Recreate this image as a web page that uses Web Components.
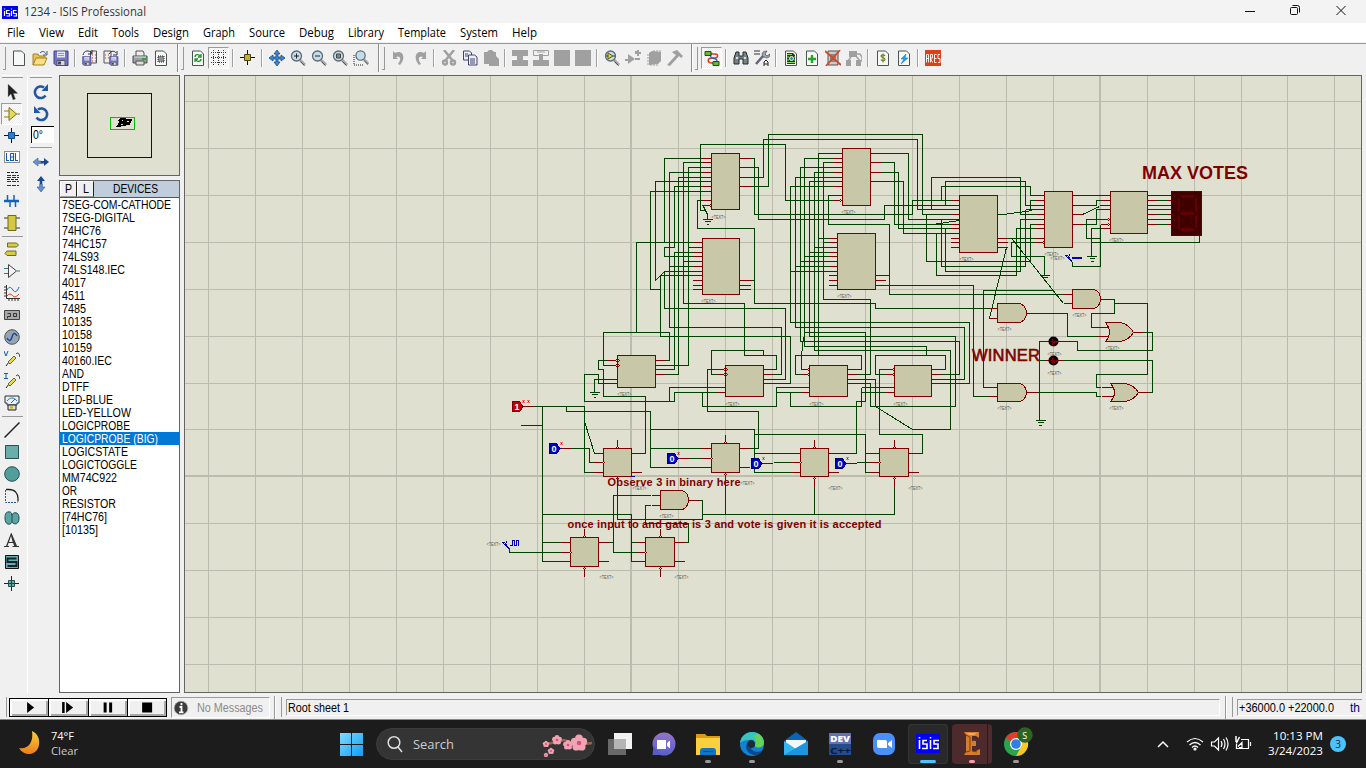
<!DOCTYPE html>
<html lang="en">
<head>
<meta charset="utf-8">
<title>1234 - ISIS Professional</title>
<style>
html,body{margin:0;height:100%;overflow:hidden;background:#f0f0f0;font-family:"Liberation Sans",Arial,sans-serif}
</style>
</head>
<body>
<isis-app></isis-app>
<script>
const define = (name, html, setup) => customElements.define(name, class extends HTMLElement {
  connectedCallback() {
    if (this.shadowRoot) return;
    const root = this.attachShadow({mode: 'open'});
    const t = document.createElement('template');
    t.innerHTML = typeof html === 'function' ? html(this) : html;
    root.append(t.content.cloneNode(true));
    if (setup) setup(this, root);
  }
});

/* One line of text set to a fixed advance width */
define('fit-text', el => {
  const w = +el.getAttribute('w'), s = +el.getAttribute('s') || 12;
  const h = Math.round(s * 1.25);
  return `<style>:host{display:block;flex:none;width:${w}px;height:${h}px}svg{display:block;overflow:visible}text{fill:currentColor;font-size:${s}px;white-space:pre}</style>
  <svg width="${w}" height="${h}"><text x="0" y="${s}" textLength="${w}" lengthAdjust="spacingAndGlyphs">${el.textContent}</text></svg>`;
});

/* ---------- icons, 16 x 16 ---------- */
const lens = inner => `<path d="M10 10l5 5" stroke="#a8a8a8" stroke-width="3"/><path d="M10.500 11.500l4 4" stroke="#555" stroke-width="1"/><circle cx="6.500" cy="6" r="5" fill="#c5dcea" stroke="#5c6b73" stroke-width="1.300"/>${inner}`;
const page = inner => `<path d="M2.500 1h8l3 3v11.500h-11z" fill="#f6f8f6" stroke="#4c5356"/>${inner}`;
const floppy = `<path d="M1 1h14v14.500h-12l-2-2z" fill="#7273cc" stroke="#3e3e86"/><path d="M4 1.500h8v6h-8z" fill="#e6e8f4"/><path d="M5 3.500h6M5 5.500h6" stroke="#999"/><path d="M4 10.500h8v5h-8z" fill="#d8d8e0" stroke="#555"/><path d="M5 11.500h3v3h-3z" fill="#446"/>`;
const mini = `<g transform="translate(0 6) scale(.6)">${floppy}</g>`;
const G = '#a0a0a0';
const ICONS = {
  isis:`<path d="M0 0h16v13H0z" fill="#0000f0"/><path d="M2.500 5v5M2.500 2.500v1M7.500 4.500h-3v3h3v2.500h-3M9.500 5v5M9.500 2.500v1M14.500 4.500h-3v3h3v2.500h-3" stroke="#fff" fill="none" stroke-width="1.200"/>`,
  new:page(''),
  open:`<path d="M1 15V4h5l1 2h6v3" fill="#e9c25a" stroke="#a3812b"/><path d="M1 15l3-7h11l-3 7z" fill="#f7df7e" stroke="#a3812b"/><path d="M8 3c3-3 5-1 6 1m1-3v4h-4" stroke="#345a80" fill="none"/>`,
  save:floppy,
  imp:`<path d="M8.500 1h6v12h-6z" fill="#eee" stroke="#555"/><path d="M10 5h1m2 0h1m-4 3h1m2 0h1m-4 3h1m2 0h1" stroke="#c33"/><path d="M1 5c1-5 6-5 9-2M10 0v4H6" stroke="#234" fill="none"/>${mini}`,
  exp:`<path d="M1 1h7v12H1z" fill="#eee" stroke="#555"/><path d="M2 5h1m2 0h1m-4 3h1m2 0h1" stroke="#c33"/><path d="M6 4c2-4 6-3 7-1m1-2v4h-4" stroke="#234" fill="none"/><g transform="translate(6 6) scale(.6)">${floppy}</g>`,
  print:`<path d="M4 6V1h7l1 2v3" fill="#eee" stroke="#555"/><path d="M1 6h14v7H1z" fill="#9ca0a2" stroke="#4a4e50"/><path d="M4 11h8v4H4z" fill="#ddd" stroke="#555"/><path d="M10 9h4" stroke="#20b020" stroke-width="2"/><path d="M2 7h12" stroke="#ddd"/>`,
  area:page(`<path d="M5 6h6v6H5z" fill="#8d9193" stroke="#222" stroke-dasharray="1 1"/>`),
  refresh:page(`<path d="M5 7c0-3 4-3 5-1m1-2v3H8M11 9c0 3-4 3-5 1m-1 2V9h3" stroke="#1a9020" stroke-width="1.300" fill="none"/>`),
  grid:`<path d="M0 2.500h16M0 7.500h16M0 12.500h16M2.500 0v16M7.500 0v16M12.500 0v16" stroke="#333" stroke-dasharray="1 1" shape-rendering="crispEdges"/>`,
  origin:`<path d="M0 7.500h15M7.500 0v15" stroke="#111"/><path d="M4.500 4.500h6v6h-6z" fill="#c2b030" stroke="#4a4410"/>`,
  pan:`<path d="M8 0l3 4H9v3h3V5l4 3-4 3V9H9v3h2l-3 4-3-4h2V9H4v2L0 8l4-3v2h3V4H5z" fill="#3c87d6" stroke="#103a74" stroke-width=".7"/>`,
  zin:lens(`<path d="M4 6h5M6.500 3.500v5" stroke="#222"/>`),
  zout:lens(`<path d="M4 6h5" stroke="#222"/>`),
  zall:lens(`<path d="M4.500 4h4v4h-4z" fill="#6d9683" stroke="#444"/>`),
  zarea:`<path d="M1 5v10h9" stroke="#222" fill="none" stroke-dasharray="1 1"/><g transform="translate(1.500 0) scale(.93)">${lens('')}</g>`,
  undo:`<path d="M2 7V1l2 2c7-4 12 4 5 12l-2-1c4-5 2-9-2-7l2 2H2z" fill="${G}"/>`,
  redo:`<path d="M14 7V1l-2 2c-7-4-12 4-5 12l2-1c-4-5-2-9 2-7l-2 2h5z" fill="${G}"/>`,
  cut:`<path d="M3 0l9 11M13 0L4 11" stroke="${G}" stroke-width="2.500"/><circle cx="4" cy="12.500" r="2" stroke="${G}" stroke-width="2.400" fill="none"/><circle cx="12" cy="12.500" r="2" stroke="${G}" stroke-width="2.400" fill="none"/>`,
  copy:`<path d="M1.500 1h6l2 2v7h-8z" fill="#eef" stroke="#3c4567"/><path d="M6.500 5h6l2.500 2v8h-8.500z" fill="#eef" stroke="#3c4567"/><path d="M3 4h3M3 6h3M8 9h5M8 11h5M8 13h5" stroke="#3c4567"/>`,
  paste:`<path d="M1 2h3l2-2h3l2 2h2v4l3 3v7H6v-2H1z" fill="${G}"/>`,
  blk1:`<path d="M0 0h16v6h-5v4h5v6H0v-6h5V6H0z" fill="${G}"/><path d="M0 9.500h4M12 9.500h4" stroke="#fff"/>`,
  blk2:`<path d="M.5.500h15v5H.5zM4 2h8" fill="none" stroke="${G}"/><path d="M6 4h4v6h6v6H0v-6h6z" fill="${G}"/>`,
  blk3:`<path d="M0 0h16v16H0z" fill="${G}"/>`,
  pick:lens(`<path d="M4 3l5 3-5 3z" fill="#dfd24b" stroke="#556020"/><path d="M2 6h2M9 6h2" stroke="#333"/>`),
  make:`<path d="M3 4l7 5-7 5v-3H0V9h3zM10 8h5v2h-5zM10 1h2v-1h2v2h2v2h-2v2h-2V4h-2z" fill="${G}"/>`,
  pack:`<path d="M3 3l3-2 9 1v9l-3 3-9 1z" fill="${G}"/><path d="M1 5h2m-2 3h2m-2 3h2m-2 3h2M5 16v-2m3 2v-2m3 2v-2M8 0v3m3-3v3m3-3v3" stroke="${G}"/>`,
  hammer:`<path d="M5 2l5-2 6 6-2 2-2-2L3 16l-3-1 9-10-3-2z" fill="${G}"/>`,
  wire:`<path d="M7 4h4c4 0 3 4 0 4H8c-5 0-5 5 0 5h2" fill="none" stroke="#d63b20" stroke-width="1.500"/><path d="M8 3c-3 3-1 5 2 5.500s4 2 2 4" stroke="#2267bd" fill="none" stroke-width="1.300"/><path d="M1 1.500h6v4H1zM9 11.500h6v4H9z" fill="#62bc32" stroke="#234d13"/>`,
  find:`<path d="M3 2h3v4h4V2h3l2 6v6h-5V9H6v5H1V8z" fill="#788388" stroke="#202a2e"/><path d="M3 8h2M11 8h2" stroke="#ddd" stroke-width="2"/>`,
  wrench:`<path d="M0 1h6M0 4h6" stroke="#333"/><path d="M2 14l7-8" stroke="#667" stroke-width="2.500"/><path d="M9 7c-2-4 0-6 4-6l-2 3 2 2 3-2c0 3-2 5-6 3z" fill="#9aa" stroke="#445" stroke-width=".7"/><path d="M10 16v-4l2-2 2 2v4m-4-2h4" stroke="#222" fill="none"/>`,
  design:page(`<path d="M4 3h6l2 2v9H4z" fill="#2c3a2a"/><path d="M4 4.500h5M4 7h2m5 0h1M4 10h2m5 0h1M4 12.500h8" stroke="#7fe04a"/><circle cx="8.500" cy="8.500" r="2" fill="#2e9e90" stroke="#dfe"/>`),
  newsh:page(`<path d="M8 5v8M4 9h8" stroke="#29a028" stroke-width="2.400"/>`),
  delsh:`<path d="M3 1h10v14H3z" fill="#ccc" stroke="#555"/><path d="M5 4h6v8H5z" fill="#888"/><path d="M0 1l16 14M15 0L1 16" stroke="#d4472a" stroke-width="1.800"/>`,
  hier:`<path d="M3 1h8v6H3z" fill="${G}"/><path d="M5 7l-3 4M10 6l4 5M11 4h3l2 3v4h-3" stroke="${G}" stroke-width="1.500" fill="none"/><path d="M0 10h5v6H0zM10 10h5v6h-5z" fill="${G}"/>`,
  bom:page(`<path d="M10 6c-1-2-4-1-4 0 0 2 4 1 4 3.500 0 1.500-3 2-4 0M8 3.500v9" stroke="#76802b" fill="none" stroke-width="1.200"/>`),
  erc:page(`<path d="M10 4l-5 5h3l-3 5 7-6H9z" fill="#2f9cea" stroke="#1767b8" stroke-width=".5"/>`),
  ares:`<path d="M0 0h16v16H0z" fill="#dc4014"/><path d="M1.500 12.500v-8h2v8M1.500 8.500h2M5.500 12.500v-8h2v3.500h-2l2 4.500M11.500 4.500h-2v8h2M9.500 8.500h2M15 4.500h-2v4h2v4h-2" stroke="#fff" fill="none" stroke-width=".9"/>`,
  arrow:`<path d="M4 0v13l3-3 2 6 2.500-1-2-5.500H14z" fill="#222" stroke="#999" stroke-width=".4"/>`,
  comp:`<path d="M0 5h5M0 11h5M12 8h4" stroke="#8a7a14"/><path d="M5 1.500v13L12.500 8z" fill="#e5d958" stroke="#7c721c"/>`,
  junc:`<path d="M0 7.500h15M7.500 0v15" stroke="#111"/><path d="M4.500 4.500h6v6h-6z" fill="#2c7dd4" stroke="#124a8c"/>`,
  lbl:`<path d="M.5 2.500h15v11H.5z" fill="#fff" stroke="#222" stroke-dasharray="1 1"/><path d="M2.500 4v7.500H5M6.500 4.500v7h3v-7h-3M6.500 8h3M11.500 4v7.500H14" stroke="#155cb4" fill="none" stroke-width="1.100"/>`,
  script:`<path d="M3 1.500h12M3 8.500h12" stroke="#222" stroke-dasharray="3 1"/><path d="M3 4.500h12M3 10.500h12M3 14.500h12M3 6.500h12" stroke="#333" stroke-dasharray="4 1"/>`,
  bus:`<path d="M0 8h15" stroke="#1260c0" stroke-width="2.500"/><path d="M3.500 2v6M10 2v6M6 8v6M11.500 8v6" stroke="#1260c0" stroke-width="1.500"/>`,
  sub:`<path d="M0 3h4M0 13h4M12 3h4M12 13h4" stroke="#333"/><path d="M4 .5h8v15H4z" fill="#d3c83f" stroke="#6e681e"/>`,
  term:`<path d="M3.500 2h9l2 2-2 2h-9zM3 10h9v4.500H3l-2-2z" fill="#d8cd42" stroke="#6e681e"/>`,
  pin:`<path d="M0 5.500h4M0 10.500h4M13 8h3" stroke="#287e7e"/><path d="M4.500 1.500v13L12.500 8z" fill="#f4f4f4" stroke="#444"/>`,
  graph:`<path d="M2.500 0v13.500H16M0 2h2M0 5h2M0 8h2M0 11h2M5 14v2M8 14v2M11 14v2M14 14v2" stroke="#333" fill="none"/><path d="M3 5c2-4 4-3 6 0s4 2 6-3" stroke="#1b63c0" fill="none"/><path d="M3 11c2-3 4-2 6 0s4 0 6-2" stroke="#d03018" fill="none"/>`,
  tape:`<path d="M.5 3.500h15v9H.5z" fill="#a9a9a9" stroke="#444"/><path d="M3.500 6.500h3v3h-3v2M9.500 6.500h3v3h-3z" fill="none" stroke="#333"/>`,
  gen:`<circle cx="8" cy="8" r="7.300" fill="#9ba4ae" stroke="#4d545c"/><path d="M3 9c2 4 4 3 5-1s3-5 5-1" stroke="#0c4da4" stroke-width="1.500" fill="none"/>`,
  vprobe:`<path d="M0 0l2 5 2-5" stroke="#155cb4" fill="none"/><path d="M2 15l3-4M12 3c2-2 3-1 4 3" stroke="#222" fill="none"/><path d="M4 11l6-6 2 2-6 6z" fill="#e8dc52" stroke="#6e681e"/>`,
  iprobe:`<path d="M0 .5h4M2 0v6M0 5.500h4" stroke="#155cb4" fill="none"/><path d="M2 15l3-4M12 3c2-2 3-1 4 3" stroke="#222" fill="none"/><path d="M4 11l6-6 2 2-6 6z" fill="#e8dc52" stroke="#6e681e"/>`,
  meter:`<path d="M1 1h14v7h-2v2H3V8H1z" fill="#e2f1f8" stroke="#333"/><path d="M3 6c3-4 7-4 10 0" stroke="#2b6fc0" fill="none"/><path d="M7 8l4-4" stroke="#c32"/><path d="M4 10h8v5H4z" fill="#ddd" stroke="#222"/><path d="M6 12.500h3" stroke="#d4aa00" stroke-width="2"/>`,
  line:`<path d="M.5 15.500l15-15" stroke="#222" stroke-width="1.500"/>`,
  box:`<path d="M1.500 1.500h13v13h-13z" fill="#6aaeac" stroke="#27504f"/>`,
  circ:`<circle cx="8" cy="8" r="7.300" fill="#529e9b" stroke="#27504f"/>`,
  arc:`<path d="M2 1.500h3c6 0 9 4 9 9v3" fill="none" stroke="#222" stroke-width="1.300"/><path d="M1.500 2v12.500h12" fill="none" stroke="#1a57ad" stroke-dasharray="2 1"/>`,
  path2:`<path d="M4 2c3-1 4 2 4 3 1-3 7-4 7 3s-5 7-7 4c-1 3-7 4-7-4 0-4 1-6 3-6z" fill="#5aa6a4" stroke="#234a49"/><path d="M8 4v8" stroke="#234a49"/>`,
  A:`<path d="M7.500 1L13 14h2v1H8.500v-1h1.800l-1.200-3H4.500L3.500 14H5v1H0v-1h2L7 1zM7 4L5 10h3.700z" fill="#333"/>`,
  S:`<path d="M1.500 1.500h13v13h-13z" fill="#6aaeac" stroke="#111"/><path d="M12.500 4.500h-9V8h9v4h-9" fill="none" stroke="#123" stroke-width="2"/>`,
  mark:`<path d="M0 7.500h15M7.500 0v15" stroke="#222"/><path d="M4.500 4.500h6v6h-6z" fill="#6aaeac" stroke="#27504f"/><path d="M7.500 5v6M4 7.500h7" stroke="#244"/>`,
  cw:`<path d="M12.500 11.500A5.800 5.800 0 1 1 11 3.500" stroke="#2258a2" stroke-width="2.600" fill="none"/><path d="M15 0v7H8.500z" fill="#2258a2"/>`,
  ccw:`<path d="M3.500 11.500A5.800 5.800 0 1 0 5 3.500" stroke="#2258a2" stroke-width="2.600" fill="none"/><path d="M1 0v7h6.500z" fill="#2258a2"/>`,
  fliph:`<path d="M0 8l5-4v3h3v2.500H5V12z" fill="#6a90cf" stroke="#365a9c" stroke-width=".6"/><path d="M16 8l-5-4v3H8v2.500h3V12z" fill="#1c4890"/>`,
  flipv:`<path d="M8 0l4 5H9.300v3H6.700V5H4z" fill="#1c4890"/><path d="M8 16l4-5H9.300V8H6.700v3H4z" fill="#6a90cf" stroke="#365a9c" stroke-width=".6"/>`,
  info:`<circle cx="8" cy="8" r="6.800" fill="#3c3c3c" stroke="#aaa" stroke-width=".6"/><path d="M8.500 3v2.200M6.500 7h2v5M6 12.300h4.500" stroke="#fff" stroke-width="1.800" fill="none"/>`
};
define('ui-icon', el => `<style>:host{display:block;flex:none;width:16px;height:16px}svg{display:block}</style><svg width="16" height="16" viewBox="0 0 16 16" fill="none">${ICONS[el.getAttribute('n')] || ''}</svg>`);

define('tool-button', el => `<style>:host{display:flex;flex:none;width:21px;height:22px;align-items:center;justify-content:center}
:host([on]){box-sizing:border-box;width:21px;border:1px solid #9a9a9a;border-right-color:#fff;border-bottom-color:#fff;background:repeating-conic-gradient(#fff 0 25%,#ededed 0 50%) 0 0/2px 2px}</style><ui-icon n="${el.getAttribute('n')}"></ui-icon>`);
define('tool-sep', el => `<style>:host{display:flex;flex:none;width:${el.getAttribute('w') || 8}px;height:18px;justify-content:center}i{width:1px;background:#a0a0a0;border-right:1px solid #fff}</style><i></i>`);
define('tool-grip', `<style>:host{display:flex;flex:none;box-sizing:border-box;width:10px;height:28px;align-items:center;border-left:1px solid #8c8c8c;box-shadow:inset 1px 0 #fff}i{margin-left:3px;width:2px;height:22px;border-right:1px solid #999;border-bottom:1px solid #999}</style><i></i>`);

define('title-bar', `<style>:host{display:flex;height:23px;align-items:center;background:#f3f3f3;color:#333;font-family:"Open Sans","Noto Sans",sans-serif;box-sizing:border-box;padding:0 17px 0 2px}
ui-icon{margin-top:5px}fit-text{margin:0 auto 0 6px}svg{flex:none}</style>
<ui-icon n="isis"></ui-icon><fit-text w="122" s="12">1234 - ISIS Professional</fit-text>
<svg width="105" height="12" fill="none" stroke="#111" style="margin-top:-2px"><path d="M1 6.500h10"/><path d="M46.500 3.500q0-1 1-1h5q1 0 1 1v5q0 1-1 1h-5q-1 0-1-1zM48.500.500h5q2 0 2 2v5"/><path d="M92.500 1l9 9M101.500 1l-9 9"/></svg>`);

define('menu-bar', () => `<style>:host{display:flex;height:19px;gap:14px;align-items:center;padding:0 0 1px 7px;background:#fff;color:#000;font-family:"Open Sans","Noto Sans",sans-serif;box-sizing:border-box}</style>` +
 [['File',18],['View',25],['Edit',20],['Tools',27],['Design',36],['Graph',32],['Source',36],['Debug',35],['Library',36],['Template',48],['System',38],['Help',25]]
 .map(([t, w]) => `<fit-text w="${w}" s="12">${t}</fit-text>`).join(''));

define('tool-bar', () => {
  const b = s => s.split(' ').map(n => n[0] === '*' ? `<tool-button on n="${n.slice(1)}"></tool-button>` : `<tool-button n="${n}"></tool-button>`).join('');
  const s = '<tool-sep></tool-sep>', g = '<tool-grip></tool-grip>';
  return `<style>:host{display:flex;height:33px;box-sizing:border-box;border-top:1px solid #999;margin-top:1px;align-items:center;padding-bottom:4px;background:#f0f0f0}.end{width:7px}tool-grip:first-of-type{border:0;width:8px;box-shadow:none}</style>`
  + g + b('new open save') + s + b('imp exp') + s + b('print area') + '<i class="end" style="width:6px"></i>'
  + g + b('refresh *grid') + s + b('origin') + s + b('pan zin zout zall zarea') + '<i class="end"></i>'
  + g + b('undo redo') + s + b('cut copy paste') + s + b('blk1 blk2 blk3 blk3') + s + b('pick make pack hammer') + '<i class="end" style="width:6px"></i>'
  + g + b('*wire') + s + b('find wrench') + s + b('design newsh delsh hier') + s + b('bom erc') + s + b('ares');
});

define('mode-strip', () => {
  const b = s => s.split(' ').map(n => `<tool-button ${n === 'comp' ? 'on' : ''} n="${n}"></tool-button>`).join('');
  return `<style>:host{display:flex;flex-direction:column;flex:none;width:28px;box-sizing:border-box;padding-left:1px;border-right:1px solid #aaa}
  hr{margin:0 3px 0 1px;border:0;border-bottom:1px solid #999;flex:none;width:21px}.g{height:1px;border-top:1px solid #fff;margin-bottom:3px}tool-button{height:22px}
  .a tool-button{height:21.800px}.a tool-button[on]{height:22px}</style>
  <hr class="g"><div class="a">${b('arrow comp junc lbl script bus sub')}</div><hr style="height:1px;margin-top:1px;margin-bottom:1px">${b('term pin graph tape gen vprobe iprobe meter')}<hr style="height:2px;margin-bottom:2px">${b('line box circ arc path2 A S mark')}`;
});
define('rotate-strip', `<style>:host{display:flex;flex-direction:column;flex:none;width:32px;box-sizing:border-box;padding-left:2px;border-left:1px solid #fff;margin-left:-1px}
hr{margin:0;border:0;border-bottom:1px solid #999;width:22px}.g{height:1px;border-top:1px solid #fff;margin-bottom:3px}tool-button{height:22px}
div{box-sizing:border-box;width:23px;height:17px;border:1px solid #000;border-right:0;border-bottom:0;background:#fff;padding:0 0 0 1px;margin:1px 0 4px 1px}</style>
<hr class="g"><tool-button n="cw"></tool-button><tool-button n="ccw"></tool-button><div><fit-text w="10" s="12">0°</fit-text></div><hr style="margin-bottom:3px"><tool-button n="fliph"></tool-button><tool-button n="flipv"></tool-button>`);

define('over-view', `<style>:host{display:block;box-sizing:border-box;height:101px;border:1px solid #646464;background:#dfe0d0}svg{display:block}</style>
<svg width="119" height="99" viewBox="60 76 119 99" fill="none" shape-rendering="crispEdges"><path d="M87.500 93.500h64v64h-64z" stroke="#0000a8"/><path d="M110.500 117.500h24v12h-24z" stroke="#00c000"/><path d="M120 118h6v1h6v2h-1v2h-1v2h-4v1h-5v1h-5v-1h1v-1h1v-2h1v-2h-1v-1h1z" fill="#000"/><path d="M122 120.500h1M127 121.500h2M121 124.500h2" stroke="#dfe0d0"/></svg>`);

define('device-list', () => {
  const L = [['7SEG-COM-CATHODE',109],['7SEG-DIGITAL',73],['74HC76',39],['74HC157',45],['74LS93',37],['74LS148.IEC',63],['4017',24],['4511',23],['7485',24],['10135',30],['10158',30],['10159',30],['40160.IEC',50],['AND',22],['DTFF',27],['LED-BLUE',51],['LED-YELLOW',69],['LOGICPROBE',68],['LOGICPROBE (BIG)',96],['LOGICSTATE',66],['LOGICTOGGLE',75],['MM74C922',55],['OR',15],['RESISTOR',54],['[74HC76]',45],['[10135]',36]];
  return `<style>:host{display:flex;flex-direction:column;box-sizing:border-box;border:1px solid #646464;background:#fff;flex:1;color:#000}
  header{display:flex;height:16px;flex:none;background:#c0cddb;border-bottom:1px solid #555}
  b{display:flex;box-sizing:border-box;width:17px;height:16px;justify-content:center;font-weight:400;background:#f0f0f0;border:1px solid #fff;border-right:1px solid #222;border-bottom-color:#999}
  b fit-text{margin-top:-1px}
  h2{margin:0;flex:1;display:flex;justify-content:center;padding-right:2px;font-weight:400;font-size:12px}
  p{margin:0;height:13px;padding-left:2px;flex:none;overflow:visible}p.on{background:#0078d7;color:#fff}p fit-text{height:13px;position:relative;top:-1px}</style>
  <header><b><fit-text w="7" s="12">P</fit-text></b><b><fit-text w="6" s="12">L</fit-text></b><h2><fit-text w="45" s="12">DEVICES</fit-text></h2></header>`
  + L.map(([t, w]) => `<p${t.includes('BIG') ? ' class="on"' : ''}><fit-text w="${w}" s="12">${t}</fit-text></p>`).join('');
});

/* ---------- schematic ---------- */
/* The sheet is drawn in regions; each has a page origin and its own units, three to a pixel,
   snapped to pixel centres so that every wire is one crisp pixel wide. */
function region(ox, oy) {
  const X = v => Math.floor(v / 3) + ox + .5, Y = v => Math.floor(v / 3) + oy + .5;
  const conv = d => d.replace(/([MLHV])\s*(-?[\d.]+)(?:\s+(-?[\d.]+))?/g, (m, c, a, b) => c === 'H' ? `H${X(a)}` : c === 'V' ? `V${Y(a)}` : `${c}${X(a)} ${Y(b)}`);
  const R = '#800000', F = '#c8c8a8';
  const line = (d, c) => `<path d="${conv(d)}" stroke="${c}"/>`;
  const api = {
    wire: d => line(d, '#004000'),
    red: d => line(d, R),
    chip(x1, y1, x2, y2, lp, l, rp, r) {
      let d = ''; l.forEach(y => d += `M${lp} ${y}H${x1}`); r.forEach(y => d += `M${x2} ${y}H${rp}`);
      return line(d, R) + `<path d="M${X(x1)} ${Y(y1)}H${X(x2)}V${Y(y2)}H${X(x1)}Z" fill="${F}" stroke="${R}"/>`;
    },
    bub: (...p) => p.map(([x, y]) => `<path d="M${X(x)-.5} ${Y(y)}h1" stroke="#dfe0d0"/><path d="M${X(x)-.5} ${Y(y)-1}h1M${X(x)-1.5} ${Y(y)}h1M${X(x)+.5} ${Y(y)}h1M${X(x)-.5} ${Y(y)+1}h1" stroke="${R}"/>`).join(''),
    ff(x1, y1, x2, y2, l, r, cx, ys) {
      return api.chip(x1, y1, x2, y2, l, ys, r, [ys[0], ys[2]]) + line(`M${cx} ${y1 - 27}V${y1}M${cx} ${y2 + 3}V${y2 + 30}`, R) + api.bub([x1 + 1, ys[1]], [cx, y1 - 4], [cx, y2 + 5]);
    },
    and(x1, y1, x2, y2, p1, p2) {
      const m = (y1 + y2) / 2 + 1, k = x1 + 62, w = X(x2) - X(k), h = (Y(y2) - Y(y1)) / 2;
      return line(`M${x1 - 28} ${p1}H${x1}M${x1 - 28} ${p2}H${x1}M${x2} ${m}H${x2 + 30}`, R) + `<path d="M${X(x1)} ${Y(y1)}H${X(k)}A${w} ${h} 0 0 1 ${X(k)} ${Y(y2)}H${X(x1)}Z" fill="${F}" stroke="${R}"/>`;
    },
    or(x1, y1, x2, y2, p1, p2) {
      const m = Y((y1 + y2) / 2 + 1);
      return line(`M${x1 - 28} ${p1}H${x1 + 14}M${x1 - 28} ${p2}H${x1 + 14}M${x2} ${(y1 + y2) / 2 + 1}H${x2 + 30}`, R) + `<path d="M${X(x1)} ${Y(y1)}H${X(x1)+14}Q${X(x2)-5} ${Y(y1)+1} ${X(x2)} ${m}Q${X(x2)-5} ${Y(y2)-1} ${X(x1)+14} ${Y(y2)}H${X(x1)}Q${X(x1)+8} ${m} ${X(x1)} ${Y(y1)}Z" fill="${F}" stroke="${R}"/>`;
    },
    gnd: (x, y) => line(`M${x - 15} ${y}H${x + 15}M${x - 8} ${y + 6}H${x + 9}M${x - 4} ${y + 14}H${x + 4}`, '#004000'),
    tag: (...p) => p.map(([x, y]) => `<text x="${X(x)}" y="${Y(y)+.5}" font-size="4.500" textLength="14" lengthAdjust="spacingAndGlyphs" fill="#55554f">&lt;TEXT&gt;</text>`).join(''),
    state(x, y, v, c, stars) {
      return line(`M${x + 30} ${y + 15}H${x + 64}`, R) + `<path d="M${X(x)} ${Y(y)}h7l3.500 5l-3.500 5h-7z" fill="${c}" stroke="${c === '#c00000' ? '#800000' : '#000080'}"/><text x="${X(x)+2}" y="${Y(y)+8.5}" font-size="9" font-family="Liberation Mono" font-weight="bold" fill="#fff">${v}</text>`
      + stars.map(s => `<path d="M${X(x+s)-1} ${Y(y)-1}l2 2m0-2l-2 2M${X(x+s)} ${Y(y)-1}v2" stroke="#ff0000" shape-rendering="auto"/>`).join('');
    },
    led: (x, y) => line(`M${x - 27} ${y}H${x + 30}`, R) + `<circle cx="${X(x)}" cy="${Y(y)}" r="5" fill="#0c0000" shape-rendering="auto"/><path d="M${X(x)-4} ${Y(y)}h3m2 0h3M${X(x)-1} ${Y(y)-3}v6m2-4v3m-3-1h5" stroke="#800000"/>`
  };
  return api;
}

define('schematic-sheet', () => {
  let g = '';
  const gl = [];
  [208,255,302,349,396,443,490,537,584,678,725,772,818,865,912,959,1006,1053,1147,1194,1241,1287,1334].forEach(x => gl.push(`<path d="M${x}.5 76V692"/>`));
  [631,1100].forEach(x => gl.push(`<path d="M${x} 76V692" stroke-width="2"/>`));
  [101,148,195,242,289,336,383,429,476,523,570,617,664].forEach(y => gl.push(y === 476 ? `<path d="M185 476H1361" stroke-width="2"/>` : `<path d="M185 ${y}.500H1361"/>`));
  g += `<g stroke="#bbbcad">${gl.join('')}</g>`;

  const A = region(630, 120), B = region(860, 120), C = region(860, 280), D = region(580, 300), E = region(480, 390);
  /* priority encoders and multiplexers */
  g += A.wire('M215 115H103V367M215 127H160V550H343V570M160 424H187M215 142H175V570M175 382H187M215 157H118V570M118 439H187M215 172H145V570M215 184H77V481L103 454H187M103 454V565H466V570M215 199H133V382H103V409H187M215 214H61V508H91M187 466H91V570M187 397H133V570M215 241H202V325H373V550H737V565H780M223 271H211V73H466V241H606M220 259L232 283V298M360 115H373V283H780M360 142H385V298H763V256H780M360 172H400V58H780M360 199H415V43H780M360 481H373M187 367H19V570');
  g += A.wire('M606 100H565V570M565 355H594M606 115H523V570M523 409H594M606 127H580V538H721V570M580 367H594M606 142H511V570M511 424H594M606 157H553V570M553 382H594M606 172H496V570M496 439H594M606 184H538V570M538 397H594M606 199H481V570M481 454H594M606 226H595V313H778');
  g += A.gnd(232, 298);
  g += A.chip(244,100,329,268,215,[115,127,142,157,172,184,199,214,241,256],360,[115,142,172,199]) + A.bub([241,256]);
  g += A.chip(217,355,329,523,187,[367,382,397,409,424,439,454,466,481,496,508],360,[481,496,508]);
  g += A.chip(637,86,722,256,606,[100,115,127,142,157,172,184,199,226,241],752,[100,127,157,184]) + A.bub([632,241]);
  g += A.chip(622,340,737,508,594,[355,367,382,397,409,424,439,454,466,481,496],766,[466,481,496]);
  g += A.tag([243,295],[213,547],[633,280],[621,532]);

  /* comparator, decoder and display */
  g += B.wire('M0 43H187V283H270M0 58H172V268H270M60 100H145V298H270M60 127H103V313H270M60 157H115V325H270M60 184H130V340H270M0 283H157V241H270M0 298H73V256H270M0 313H88V523H610M214 268V172H481V283H526M256 256V184H496V256H526M244 241V199H511V226H526M526 241H511V271M496 268V439H244V298M526 268H496M413 283H430M200 283V424H511V313H526M256 325V454H481V298H526M229 340V466H469V325H526M441 355H526M526 367H454V409H553V466M668 226H722M668 256H710V241H722M718 256H722M668 313H710V268H722M722 298H680V355H721M722 313V439H638V424M722 325H695V409M695 367H1018V360M75 466H88M75 496H340V570M580 511H370V570M750 538H763V570M763 550H863V570M0 538H32V570M0 550H47V565H385');
  g += B.wire('M217 313L298 301M668 283L718 259M457 358L610 550M439 382L387 595M430 283L517 271');
  g += B.gnd(553,466) + B.gnd(695,409);
  g += B.chip(298,226,413,397,270,[241,256,268,283,298,313,325,340,355,367,382],441,[355,367,382]);
  g += B.chip(553,214,638,382,526,[226,241,256,268,283,298,313,325,355,367],668,[226,256,283,313]) + B.bub([550,367]);
  g += B.chip(751,214,863,340,722,[226,241,256,268,298,313,325],893,[226,241,256,268,283,298,313]) + B.bub([746,298],[746,313]);
  [226,241,256,268,283,298,313].forEach(y => g += B.wire(`M893 ${y}H919`) + B.red(`M919 ${y}H934`));
  g += B.red('M1018 347V361') + `<path d="M1171.500 191.500h30v44h-30z" fill="#400000" stroke="#600000"/><g fill="#600000"><path d="M1180 195h15l-2 3h-11zM1180 213.500l2-1.500h11l2 1.500-2 1.500h-11zM1180 231h15l-2-3h-11zM1177.500 197l2.500 2v12l-2.500 2zM1197 197l-2.500 2v12l2.500 2zM1177.500 214l2.500 2v12l-2.500 2zM1197 214l-2.500 2v12l2.500 2z"/></g>`;
  g += B.and(638,508,722,566,523,550);
  g += B.tag([297,421],[552,406],[570,418],[747,364]);
  g += `<path d="M1065.500 255.500l2 2h2l-2-2zM1068 257.500l4 4M1069.500 254v2" stroke="#0000b0"/><path d="M1072 258h10" stroke="#0000c0" stroke-width="2"/>`;

  /* output gates and winner LEDs */
  g += C.wire('M32 58V283H0M340 16V349H385M370 31V322H385M528 100H622V169H709M709 142H695V100H763V58M850 157H877V211H652V184H610M763 70H863V283H710V322H722M863 337H877V241H610M528 337H710V349H722M553 184H538V421M538 241H553M245 268H256V226H47V283H72M72 268H58V463H187V480M245 283H298V184H0M245 298H314V142H0M245 310H328V127H0M0 169H286V379H32V310H0M0 211H271V448H157L47 379V298H0M0 199H200V226M72 322H5M72 337H5');
  g += C.and(412,70,498,127,86,115) + C.and(412,310,498,364,322,349) + C.or(736,127,820,184,142,169) + C.or(751,310,835,364,322,349) + C.gnd(540,421) + C.led(580,184) + C.led(580,241);
  g += C.chip(103,256,215,349,72,[268,283,322,337],245,[268,283,298,310]) + C.bub([99,268],[99,283]);
  g += C.tag([411,151],[636,109],[735,208],[561,226],[561,283],[411,388],[747,388],[99,376]);

  /* counters */
  g += D.wire('M169 0V97M241 0V109H632V250H580M253 0V25H616V238H580M268 0V82H604V223H580M283 0V208H257M295 0V223H257M310 10H493V166H590V208H580M325 0V196H257M257 181H268V97H70V196H82M82 181H55V208H70V289H196V450M43 277V238H82M82 250H55V223H13V304H283V277H410M268 304V262H410M408 208H382V334H535V445H508M408 223H394V151H551V166M368 277V319H590V262H660M590 277H660M632 277V319H845V262M833 208H845V166H647V223H660M660 208H664V166L670 112M833 223H872V0M833 238H886V319M833 250H872V319H886M631 0V67H842M646 0V82H842M661 0V124H842M673 0V139H842M688 0V109H842M703 0V151H842M715 0V166M673 97H857V304H830V450M524 0V10H887V25');
  g += D.gnd(43,277);
  g += D.chip(112,166,227,262,82,[181,196,238,250],257,[181,196,208,223]) + D.bub([109,181],[115,181],[109,196],[115,196]);
  g += D.chip(436,196,551,289,408,[208,223,262,277],580,[208,223,238,250]) + D.bub([433,208],[439,208],[433,223],[439,223]);
  g += D.chip(688,196,803,289,660,[208,223,262,277],833,[208,223,238,250]) + D.bub([685,208],[685,223]);
  g += D.tag([111,286],[435,316],[687,316]);

  /* flip-flops and inputs */
  g += E.wire('M160 49H313V247H341M259 49V64H512V232H665M512 175H665M512 118H824V247H930M824 190H930M824 133H1157V247H1168M1157 190H1168M187 49V514H243M120 106H187M187 457H243M187 373H454V514H468M454 457H468M313 94L343 190M485 190H496V19H370M273 175H328V217H341M412 290V388H668V331H655M625 205H665M808 175H835V64H682V0M1074 190H1130V34M880 217H930M1314 190H1328V133H1198M1130 217H1168M736 275V373M1003 290V373M1243 290V373H668M511 316H400V487H468M511 346H496V400H626V457H612M386 457H400M88 472V487H243');
  g += E.ff(370,175,455,259,341,485,412,[190,217,247]) + E.ff(694,160,779,247,665,808,736,[175,205,232]) + E.ff(961,175,1046,259,930,1074,1003,[190,217,247]) + E.ff(1198,175,1286,259,1168,1314,1243,[190,217,247]) + E.ff(271,442,356,529,243,386,313,[457,487,514]) + E.ff(496,442,584,529,468,612,541,[457,487,514]);
  g += E.and(541,301,626,358,316,346);
  g += E.state(97,34,1,'#c00000',[34,48]) + E.state(209,160,0,'#0000c0',[36]) + E.state(562,190,0,'#0000c0',[34]) + E.state(814,204,0,'#0000c0',[36]) + E.state(1066,204,0,'#0000c0',[36]);
  g += E.tag([456,298],[780,283],[1044,298],[1284,298],[537,382],[357,565],[582,565],[18,466]);
  g += `<path d="M502.500 542.500l2 2h2l-2-2zM505 544.500l4 4M506.500 541v2M510 545.500h2v-5h2v5h2v-5h2v5M631 476.500h4" stroke="#0000b0"/>`;

  return `<style>:host{display:block;flex:none;width:1178px;box-sizing:border-box;height:618px;border:1px solid #646464;background:#dfe0d0;overflow:hidden}svg{display:block}text{font-family:"Liberation Sans",Arial,sans-serif}.n{fill:#800000;font-weight:700}</style>
  <svg width="1176" height="616" viewBox="185 76 1176 616" fill="none" shape-rendering="crispEdges">${g}
  <text class="n" x="1142" y="179" font-size="18" textLength="106">MAX VOTES</text>
  <text x="972" y="361" font-size="16.500" textLength="68" fill="#800000" stroke="#800000" stroke-width=".6">WINNER</text>
  <text class="n" x="607.500" y="486" font-size="11" textLength="133">Observe 3 in binary here</text>
  <text class="n" x="567.500" y="528" font-size="11" textLength="314">once input to and gate is 3 and vote is given it is accepted</text></svg>`;
});

define('status-bar', `<style>:host{display:flex;height:27px;box-sizing:border-box;padding:3px 4px 0 4px;background:#f0f0f0;color:#000;border-bottom:1px solid #888}
.grip{width:2px;height:20px;border-right:1px solid #999;margin-right:2px;margin-top:1px;flex:none}.bar{width:1px;background:#999;border-right:1px solid #fff;height:23px;flex:none}
.play{display:flex;box-sizing:border-box;width:158px;height:19px;border:1px solid #000;margin:2px 4px 0 0;background:#000;gap:1px;flex:none}
.play svg{flex:1;height:17px;width:38px;background:#f0f0f0;box-shadow:inset 2px 2px #fff,inset -2px -2px #a8a8a8}
.f{display:flex;box-sizing:border-box;border:1px solid #999;border-right-color:#fff;border-bottom-color:#fff;height:17px;margin-top:3px;padding:0 2px 0 1px}
.m{width:99px;height:21px;margin-top:1px;color:#8a8a8a;align-items:center;padding:0 0 0 1px;flex:none}</style>
<i class="grip"></i><div class="play"><svg viewBox="0 0 38 17"><path d="M17 3v11l7-5.500z"/></svg><svg viewBox="0 0 38 17"><path d="M13 3h2.500v11H13zM17 3v11l7-5.500z"/></svg><svg viewBox="0 0 38 17"><path d="M14.500 3.500h3v10h-3zM20 3.500h3v10h-3z"/></svg><svg viewBox="0 0 38 17"><path d="M14 3.500h10v10H14z"/></svg></div>
<div class="f m"><ui-icon n="info"></ui-icon><fit-text w="66" s="12" style="margin-left:8px">No Messages</fit-text></div>
<i class="bar" style="margin-left:4px"></i><i class="grip" style="margin-left:3px"></i>
<div class="f" style="flex:1;margin-left:2px"><fit-text w="61" s="12">Root sheet 1</fit-text></div>
<i class="bar" style="margin-left:5px"></i><i class="grip" style="margin-left:3px"></i>
<div class="f" style="width:125px;justify-content:space-between;margin-left:2px;border-right:0"><fit-text w="95" s="12">+36000.0 +22000.0</fit-text><fit-text w="10" s="12" style="color:#000080">th</fit-text></div>`);

/* ---------- taskbar ---------- */
const flower = (x, y, r) => `<g fill="#f0a3b4">${[0,72,144,216,288].map(a => `<circle cx="${x + r * .6 * Math.sin(a / 57.3)}" cy="${y - r * .6 * Math.cos(a / 57.3)}" r="${r * .52}"/>`).join('')}</g><circle cx="${x}" cy="${y}" r="${r * .3}" fill="#d84f76"/>`;
const APPS = {
  view:`<path d="M8 0h18v16H8z" fill="#f2f2f2"/><path d="M2 6h18v16H2z" fill="#777" fill-opacity=".85"/><path d="M8 6h12v10H8z" fill="#b5b5b5"/>`,
  chat:`<circle cx="14" cy="11" r="11.500" fill="url(#c)"/><path d="M2.500 22l1-9 8 9z" fill="#5c58c8"/><path d="M7 7h9v9H7zM17 10l3-2.500v8L17 13z" fill="#fff"/><defs><linearGradient id="c" x2="0" y2="1"><stop stop-color="#9474c8"/><stop offset="1" stop-color="#5860c8"/></linearGradient></defs>`,
  files:`<path d="M2 1h9l2 2h13v8H2z" fill="#dc9c10"/><path d="M2 5h24v17H2z" fill="#fccf3e"/><path d="M6 22v-4q0-3 3-3h10q3 0 3 3v4z" fill="#1274c4"/><path d="M9 18.500h10" stroke="#0c4c94"/>`,
  edge:`<circle cx="14" cy="11" r="12" fill="#1480d0"/><path d="M2 10C3 3 8-1 14-1c8 0 12 6 12 10 0 5-6 6-9 4 2-6-3-7-7-6-4 0-7 2-8 3z" fill="#35c6c0"/><path d="M20 1c5 2 7 9 5 12-3 2-6 2-8 0 2-4 1-8-2-10z" fill="#62d45c"/><path d="M10 9c-5 6 1 14 9 13 3-1 4-2 5-4-5 2-11 0-12-5z" fill="#0c488c"/><path d="M14 7a4 4 0 1 0 2 7c2-2 1-6-2-7z" fill="#1c2a34"/>`,
  mail:`<path d="M2 8L14-1 26 8v3H2z" fill="#0c64b4"/><path d="M4 7h20v9H4z" fill="#f4f6f8"/><path d="M2 8l12 8 12-8v14H2z" fill="#36b6f0"/><path d="M2 22l24-14v14z" fill="#1c94e0"/>`,
  dev:`<path d="M3 0h22v22H3z" fill="#254b88"/><path d="M3 0h22v11H3z" fill="#6270bd"/><text x="4" y="8.500" font-size="8" font-weight="800" textLength="20" lengthAdjust="spacingAndGlyphs" fill="#fff">DEV</text><text x="4" y="20.500" font-size="8" font-weight="700" textLength="21" lengthAdjust="spacingAndGlyphs" fill="#061a44">C++</text>`,
  zoom:`<rect x="3" y="0" width="22" height="22" rx="7" fill="#4a90fa"/><path d="M7 7h8q2 0 2 2v6H9q-2 0-2-2zM18 10l4-3v8l-4-3z" fill="#fff"/>`,
  isis:`<path d="M2 1h24v19H2z" fill="#0000fa"/><path d="M5.500 7v9M5.500 4v1.500M13 7.500H9v3.500h4v4.500H8M16.500 7v9M16.500 4v1.500M25 7.500h-5v3.500h4v4.500h-5" stroke="#fff" stroke-width="1.600" fill="none"/>`,
  ee:`<path d="M6-1h15v6l-3-2h-4v5h4v5h-4v5h4l4-2v6H6l2-3V2z" fill="#d57d2c"/><path d="M8 2l4 2v14l-4 1M14 8l3-1M14 18l5 1" stroke="#7c3a10" fill="none"/><path d="M8 0h11l-3 2h-5z" fill="#f4a955"/>`,
  chrome:`<circle cx="14" cy="11" r="12" fill="#2ba24c"/><path d="M14 11L3.600 5A12 12 0 0 1 24.400 5z" fill="#e33b2e"/><path d="M14 5h10.500A12 12 0 0 1 14 23l5-9z" fill="#fcc727"/><circle cx="14" cy="11" r="6" fill="#fff"/><circle cx="14" cy="11" r="4.800" fill="#2f7de8"/><circle cx="23" cy="2" r="7.700" fill="#2c6420"/><text x="20.200" y="5.500" font-size="9" fill="#fff">S</text>`
};
define('task-item', el => `<style>:host{display:flex;flex-direction:column;align-items:center;box-sizing:border-box;width:40px;height:40px;margin:0 2px;border-radius:4px;padding-top:9px;flex:none}
:host([kind=active]){background:#292929;box-shadow:inset 0 0 0 1px #343434}:host([kind=alert]){background:linear-gradient(90deg,#4d2a2b 35px,#271c1c 35px,#271c1c 36px,#4d2a2b 36px)}
svg{display:block;overflow:visible}i{height:3px;width:6px;border-radius:2px;background:#999;margin-top:5px}:host([kind=active]) i{width:16px;background:#4cc2ff}:host([kind=alert]) i{background:#ff99a4}text{font-family:"Open Sans",sans-serif}</style>
<svg width="28" height="22" viewBox="0 0 28 22">${APPS[el.getAttribute('n')]}</svg>${el.hasAttribute('kind') ? '<i></i>' : ''}`);

define('task-bar', `<style>:host{display:flex;height:48px;box-sizing:border-box;align-items:center;background:#1c1c1c;color:#fff;font-family:"Open Sans","Noto Sans",sans-serif}
.w{display:flex;align-items:center;width:339px;padding-left:19px;box-sizing:border-box;gap:8px}.w div{display:flex;flex-direction:column;gap:1px;margin-top:-1px}
.s{box-sizing:border-box;display:flex;align-items:center;width:219px;height:32px;border-radius:16px;background:#343434;margin:0 3px 0 12px;padding-left:10px;gap:10px;color:#ccc;border:1px solid #3c3c3c}
.t{display:flex;align-items:center;margin-left:auto;padding-right:20px}.t div{display:flex;flex-direction:column;align-items:flex-end;gap:1px;margin:-3px 7px 0 16px}
.n{width:16px;height:16px;border-radius:8px;background:#4cc2ff;color:#123;font-size:10px;line-height:16px;text-align:center}svg{flex:none;display:block}</style>
<div class="w"><svg width="24" height="26" viewBox="0 0 24 26"><defs><linearGradient id="m" x2="0" y2="1"><stop stop-color="#f6cf3c"/><stop offset="1" stop-color="#ee7c1c"/></linearGradient></defs><path d="M13 0C19 3 21 8 20 14 18 25 5 26 0 17c8 2 15-5 13-17z" fill="url(#m)"/></svg>
<div><fit-text w="23" s="11">74°F</fit-text><fit-text w="27" s="11" style="color:#ccc">Clear</fit-text></div></div>
<svg width="25" height="25" viewBox="0 0 25 25"><defs><linearGradient id="win" x2="1" y2="1"><stop stop-color="#7edcff"/><stop offset="1" stop-color="#109cf8"/></linearGradient></defs><path d="M1 1h11v11H1zM13 1h11v11H13zM1 13h11v11H1zM13 13h11v11H13z" fill="url(#win)"/></svg>
<div class="s"><svg width="16" height="18" viewBox="0 0 16 18" fill="none" stroke="#ddd" stroke-width="1.500"><circle cx="7" cy="7.500" r="5.800"/><path d="M11 12l4 5"/></svg><fit-text w="41" s="12.500">Search</fit-text>
<svg style="margin-left:78px" width="52" height="26" viewBox="0 0 52 26"><path d="M50 12L36 14 22 9 5 13M30 12l-6 4" stroke="#986448" stroke-width="2.500" fill="none"/>${flower(37,12,7.5)}${flower(26,14,4.5)}${flower(15,9,4.5)}${flower(4,13,3)}${flower(9,20,3)}${flower(4,24,2)}</svg></div>
<task-item n="view"></task-item><task-item n="chat"></task-item><task-item n="files" kind="open"></task-item><task-item n="edge" kind="open"></task-item><task-item n="mail"></task-item><task-item n="dev" kind="open"></task-item><task-item n="zoom"></task-item><task-item n="isis" kind="active"></task-item><task-item n="ee" kind="alert"></task-item><task-item n="chrome" kind="open"></task-item>
<div class="t"><svg width="96" height="20" viewBox="1156 734 96 20" fill="none" stroke="#fff" stroke-width="1.200"><path d="M1158 747l5-5 5 5" stroke-width="1.500"/><path d="M1187 742q8-7 16 0M1189.500 745q5.500-5 11 0M1192 747.500q3-3 6 0"/><circle cx="1195" cy="749" r="1" fill="#fff"/><path d="M1211.500 742h3l4-4v12l-4-4h-3zM1221 741q2 3 0 6M1223.500 739q3 5 0 10M1226 737.500q4 6 0 13"/><path d="M1241 739.500h7.500v9h-12v-5M1250.500 742v4M1238 746.500l4-4v5h-3"/><path d="M1236 736v6M1239.500 737l-3 6" stroke-width="1.500"/></svg>
<div><fit-text w="50" s="11.500">10:13 PM</fit-text><fit-text w="55" s="11.500">3/24/2023</fit-text></div><span class="n">3</span></div>`);

define('isis-app', `<style>:host{display:flex;flex-direction:column;width:1366px;height:768px;background:#f0f0f0}
main{display:flex;flex:none;height:618px;margin-top:-1px}aside{display:flex;flex-direction:column;width:121px;gap:4px;flex:none;margin-right:4px;height:618px}</style>
<title-bar></title-bar><menu-bar></menu-bar><tool-bar></tool-bar>
<main><mode-strip></mode-strip><rotate-strip></rotate-strip><aside><over-view></over-view><device-list></device-list></aside><schematic-sheet></schematic-sheet></main>
<status-bar></status-bar><task-bar></task-bar>`);
</script>
</body>
</html>
